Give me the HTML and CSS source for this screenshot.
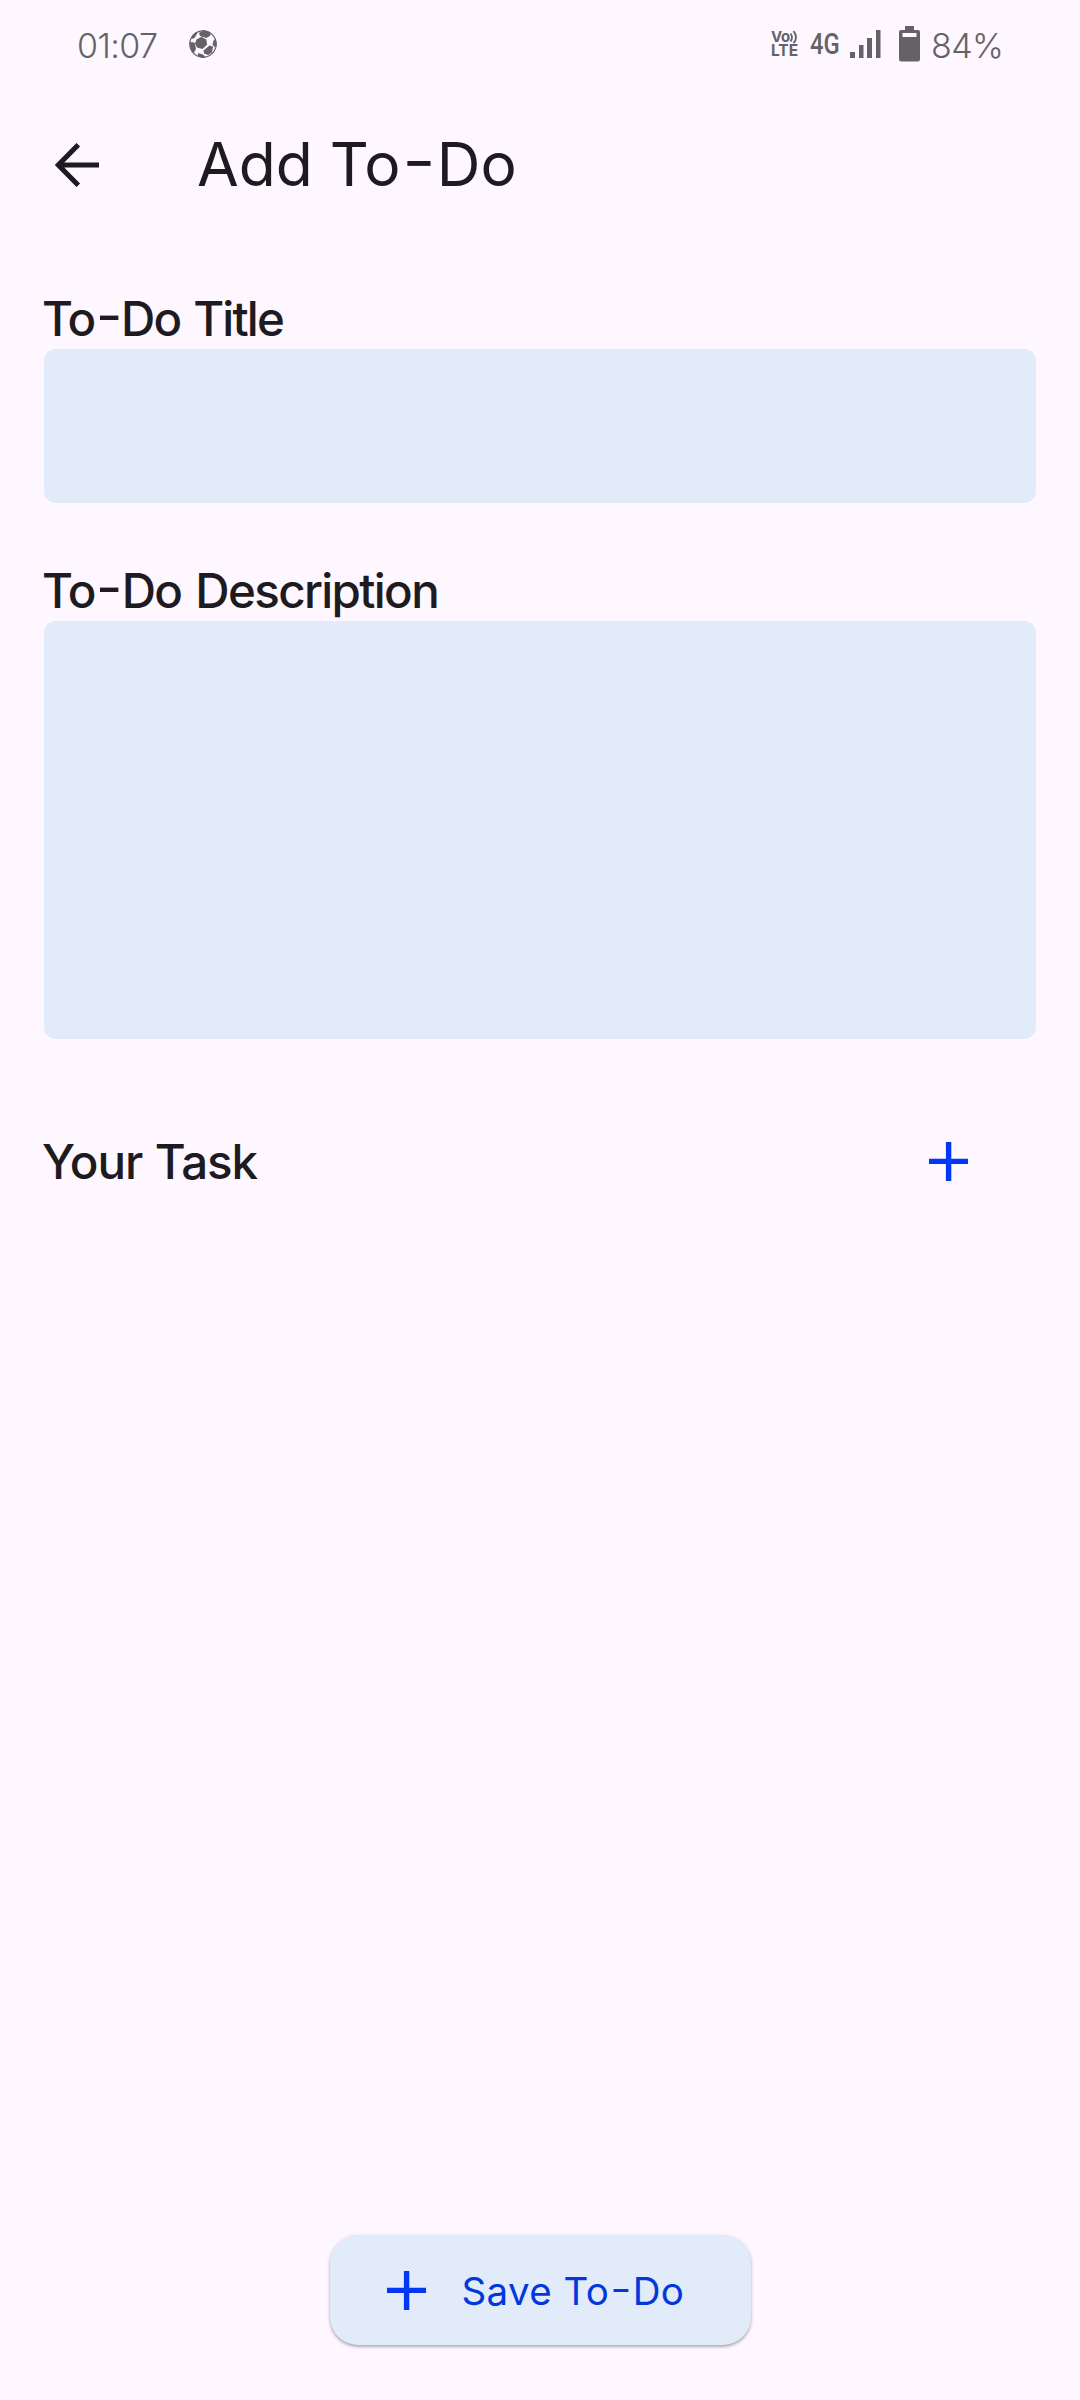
FILE: index.html
```html
<!DOCTYPE html>
<html lang="en">
<head>
<meta charset="utf-8">
<title>Add To-Do</title>
<link rel="stylesheet" href="styles.css">
</head>
<body>
<div class="screen">
  <header class="status">
    <span class="clock">01:07</span>
    <svg class="ball" width="28" height="28" viewBox="0 0 28 28">
      <circle cx="14" cy="14" r="13.2" fill="none" stroke="#656267" stroke-width="1.2"/>
      <g fill="#656267">
        <path d="M7.500 9.500l5-2.700 5 3 .5 5-4.500 4.200-5.500-1.500-2-4z"/>
        <path d="M10 3l5-3 6 2 .5 3.500-4 2.500-6.500-2z"/>
        <path d="M.5 12l5 .5 1.500 6-2 4.500-3-2.500z"/>
        <path d="M9 23l5 1.500 3 3-4 .5-4-2z"/>
        <path d="M14.500 20.500l6-5 3.500 1-1 6-4 2.500-4-1.500z"/>
        <path d="M25 9l2.500 3v4l-2 1-2-2.500z"/>
        <path d="M3 6l4-4 1.500 1-3 5-3 1z"/>
      </g>
    </svg>
    <div class="volte">
      <div class="vo"><span>Vo</span><svg width="8" height="14" viewBox="0 0 8 14" fill="none" stroke="#656267" stroke-width="1.800"><path d="M.5 3.500q3 3.500 0 8M3.500 1.200q5 6 0 12"/></svg></div>
      <div class="lte">LTE</div>
    </div>
    <span class="net">4G</span>
    <svg class="signal" width="31" height="28" viewBox="0 0 31 28" fill="#656267"><path d="M0 22h5v6H0zM9 15h4.500v13H9zM17 8h5v20h-5zM26 0h4.500v28H26z"/></svg>
    <svg class="battery" width="21" height="36" viewBox="0 0 21 36"><path fill="#656267" fill-rule="evenodd" d="M6 0h9v4h4q2 0 2 2v27q0 2.500-2.500 2.500h-16Q0 35.500 0 33V6q0-2 2-2h4zM3.500 7v4h14V7z"/></svg>
    <span class="percent">84%</span>
  </header>
  <div class="appbar">
    <svg class="back" width="44" height="44" viewBox="0 0 44 44" fill="none" stroke="#1d1b20" stroke-width="5"><path d="M44 22H4M23.300 1.700L3.300 22l20 20.300"/></svg>
    <h1 class="title">Add To<span class="dash">-</span>Do</h1>
  </div>
  <main class="form">
    <label class="label l1">To<span class="dash">-</span>Do Title</label>
    <div class="field short"></div>
    <label class="label l2">To<span class="dash">-</span>Do Description</label>
    <div class="field tall"></div>
    <div class="task">
      <span class="label l3">Your Task</span>
      <svg width="39" height="39" viewBox="0 0 39 39" fill="#0038f5"><path d="M16.900 0h5.400v16.700H39v5.400H22.300V39h-5.400V22.100H0v-5.400h16.900z"/></svg>
    </div>
  </main>
  <div class="save">
    <svg width="39" height="39" viewBox="0 0 39 39" fill="#0038f5"><path d="M16.900 0h5.400v16.700H39v5.400H22.300V39h-5.400V22.100H0v-5.400h16.900z"/></svg>
    <span class="savetext">Save To<span class="dash">-</span>Do</span>
  </div>
</div>
</body>
</html>
```
FILE: styles.css
```css
* { box-sizing: border-box; }
body { margin: 0; background: #fef7ff; font-family: Inter, sans-serif; color: #1d1b20; }
svg { display: block; flex: none; }
.screen { width: 1080px; height: 2400px; display: flex; flex-direction: column; }
.status { height: 90px; padding-left: 77px; display: flex; align-items: center; color: #656267; white-space: nowrap; }
.clock { font-size: 34px; font-weight: 350; letter-spacing: -0.6px; width: 112px; }
.ball { margin-top: -2px; }
.volte { margin-left: 554px; width: 39px; display: flex; flex-direction: column; font-weight: 700; margin-top: -2px; }
.vo { display: flex; height: 14px; line-height: 14px; font-size: 15px; letter-spacing: -0.2px; align-items: center; }
.lte { font-size: 15.5px; line-height: 14px; letter-spacing: 0; }
.net { font-family: Roboto, sans-serif; font-size: 29px; font-weight: 500; margin-top: -2px; width: 40px; transform: scaleX(.82); transform-origin: left; }
.signal { margin: -3px 18px 0 0; }
.battery { margin: -2px 11px 0 0; }
.percent { font-size: 34px; font-weight: 350; letter-spacing: -0.6px; }
.appbar { height: 148px; padding-left: 55px; display: flex; align-items: center; }
.back { margin-top: 2px; }
.title { margin: 0 0 0 98px; font-size: 60.5px; line-height: 80px; font-weight: 400; white-space: nowrap; }
.dash { display: inline-block; font-feature-settings: "case"; margin: 0 .07em; transform: translateY(-.02em) scaleX(1.2); }
.form { padding: 47px 44px 0; }
.label { display: block; margin-left: -2px; font-size: 47.5px; line-height: 68px; font-weight: 550; white-space: nowrap; }
.l1 { letter-spacing: -1.85px; word-spacing: 2px; }
.l2 { letter-spacing: -1.65px; word-spacing: 3px; }
.l3 { letter-spacing: -1.1px; word-spacing: 1px; position: relative; top: 1px; }
.field { background: #e1ebfa; border-radius: 12px; }
.short { height: 154px; margin: -4px 0 54px; }
.tall { height: 418px; margin-top: -4px; }
.task { margin-top: 88px; padding-right: 68px; display: flex; justify-content: space-between; align-items: center; }
.save { margin: auto auto 55px; width: 421px; height: 110px; padding-left: 57px; border-radius: 28px; background: #e1ebfa; box-shadow: 0 2px 3px rgba(0,0,0,.27), 0 1px 5px rgba(0,0,0,.08); display: flex; align-items: center; color: #0038dc; }
.savetext { margin: 2px 0 0 36px; font-size: 38.5px; line-height: 50px; letter-spacing: .4px; white-space: nowrap; }
```
